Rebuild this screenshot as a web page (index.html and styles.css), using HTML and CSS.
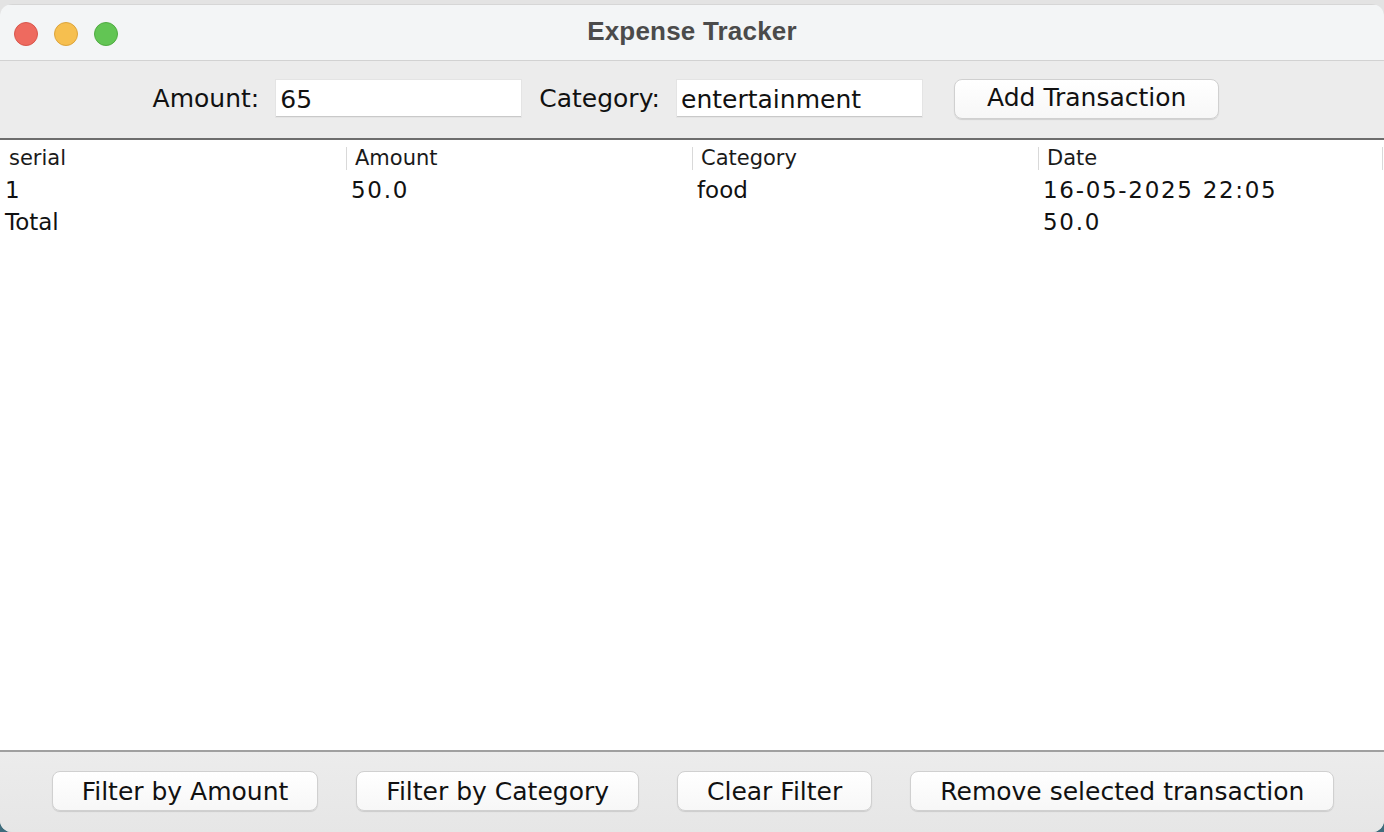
FILE: index.html
```html
<!DOCTYPE html>
<html lang="en">
<head>
<meta charset="utf-8">
<title>Expense Tracker</title>
<link rel="stylesheet" href="styles.css">
</head>
<body>
<div class="window">
  <header class="titlebar">
    <div class="lights">
      <span class="light red"></span>
      <span class="light yellow"></span>
      <span class="light green"></span>
    </div>
    <div class="title">Expense Tracker</div>
    <div></div>
  </header>
  <section class="toolbar">
    <span class="label">Amount:</span>
    <div class="field field-amount">65</div>
    <span class="label">Category:</span>
    <div class="field field-category">entertainment</div>
    <button class="btn">Add Transaction</button>
  </section>
  <main class="table">
    <div class="row head">
      <div class="cell">serial</div>
      <div class="cell">Amount</div>
      <div class="cell">Category</div>
      <div class="cell">Date</div>
    </div>
    <div class="row">
      <div class="cell">1</div>
      <div class="cell num">50.0</div>
      <div class="cell">food</div>
      <div class="cell num">16-05-2025 22:05</div>
    </div>
    <div class="row">
      <div class="cell">Total</div>
      <div class="cell"></div>
      <div class="cell"></div>
      <div class="cell num">50.0</div>
    </div>
  </main>
  <footer class="bottombar">
    <button class="btn">Filter by Amount</button>
    <button class="btn">Filter by Category</button>
    <button class="btn">Clear Filter</button>
    <button class="btn">Remove selected transaction</button>
  </footer>
</div>
</body>
</html>
```

FILE: styles.css
```css
* {
  box-sizing: border-box;
}

html, body {
  margin: 0;
  padding: 0;
}

body {
  width: 1384px;
  height: 832px;
  overflow: hidden;
  background: linear-gradient(to bottom, #e3e3e3 0, #e3e3e3 50%, #3e6c7c 50%, #3e6c7c 100%);
  font-family: "DejaVu Sans", "Noto Sans", sans-serif;
  color: #111;
  padding-top: 4px;
}

.window {
  height: 828px;
  display: flex;
  flex-direction: column;
  border-radius: 12px;
  overflow: hidden;
  background: #ffffff;
  box-shadow: inset 0 0 0 1px #cfcfcf;
}

.titlebar {
  height: 57px;
  flex: none;
  display: grid;
  grid-template-columns: 1fr auto 1fr;
  align-items: center;
  background: #f3f5f6;
  border-bottom: 1px solid #d2d2d2;
  border-top: 1px solid #d6d6d6;
}

.lights {
  display: flex;
  gap: 16px;
  padding-left: 14px;
  padding-top: 2px;
}

.light {
  width: 24px;
  height: 24px;
  border-radius: 50%;
  display: block;
}

.red {
  background: #ee6a5f;
  border: 1px solid #d8564c;
}

.yellow {
  background: #f6bf4f;
  border: 1px solid #dca43c;
}

.green {
  background: #62c554;
  border: 1px solid #50ab42;
}

.title {
  font-family: "Liberation Sans", Arial, sans-serif;
  font-weight: bold;
  font-size: 26px;
  color: #4b4b4b;
  letter-spacing: 0.2px;
  padding-bottom: 2px;
}

.toolbar {
  height: 79px;
  flex: none;
  display: flex;
  align-items: center;
  justify-content: center;
  padding-right: 12px;
  padding-bottom: 2px;
  background: #ececec;
  border-bottom: 2px solid #6d6d6d;
}

.label {
  font-size: 25px;
  margin-right: 17px;
}

.field {
  width: 245px;
  height: 37px;
  background: #ffffff;
  border-bottom: 1px solid #c9c9c9;
  box-shadow: 0 0 0 1px #e4e4e4;
  font-size: 25px;
  line-height: 37px;
  padding-left: 4px;
  padding-top: 1px;
}

.field-amount {
  margin-right: 18px;
}

.field-category {
  margin-right: 32px;
}

.btn {
  height: 40px;
  padding: 0 29px;
  font-family: "DejaVu Sans", "Noto Sans", sans-serif;
  font-size: 25px;
  color: #111;
  background: linear-gradient(to bottom, #ffffff, #f7f7f7);
  border: 1px solid #d0d0d0;
  border-radius: 8px;
  box-shadow: 0 1px 1px rgba(0, 0, 0, 0.12);
  cursor: default;
}

.toolbar .btn {
  padding: 0 32px 2px;
}

.table {
  flex: 1;
  background: #ffffff;
  padding-top: 2px;
}

.row {
  display: grid;
  grid-template-columns: repeat(4, 1fr);
  height: 32px;
  align-items: center;
}

.cell {
  position: relative;
  font-size: 23px;
  padding-left: 5px;
  white-space: nowrap;
}

.cell.num {
  letter-spacing: 1.7px;
}

.head .cell {
  font-size: 21px;
  padding-left: 9px;
  color: #1a1a1a;
  height: 32px;
  line-height: 32px;
}

.head .cell::after {
  content: "";
  position: absolute;
  right: -1px;
  top: 5px;
  bottom: 4px;
  width: 1px;
  background: #d9d9d9;
}

.head .cell:last-child::after {
  right: 1px;
}

.bottombar {
  height: 82px;
  flex: none;
  display: flex;
  align-items: center;
  justify-content: center;
  gap: 38px;
  padding-bottom: 2px;
  padding-left: 2px;
  border-top: 2px solid #a0a0a0;
  background: linear-gradient(to bottom, #ececec, #e6e6e6);
}
```
